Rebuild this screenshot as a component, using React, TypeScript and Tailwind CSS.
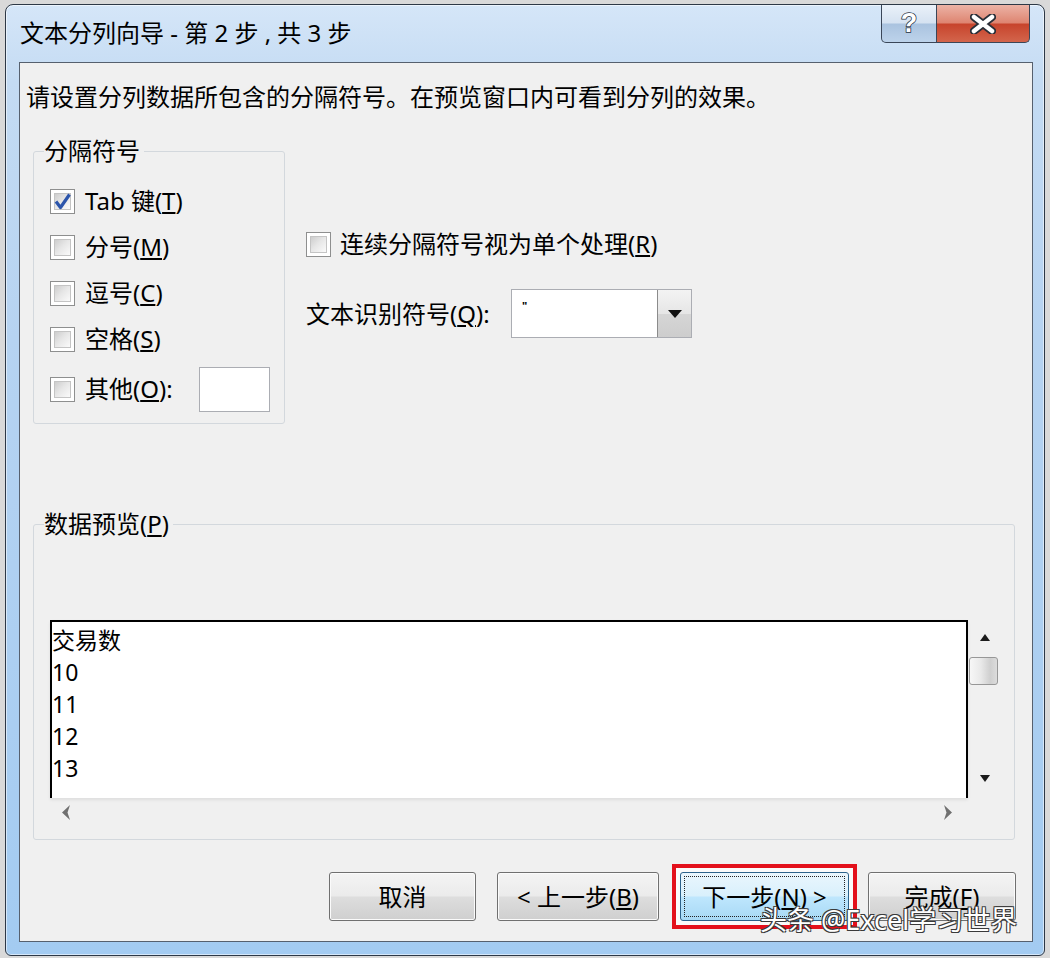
import React from 'react';

const CheckBox: React.FC<{ checked?: boolean }> = ({ checked = false }) => (
  <span className="flex h-[25px] w-[25px] shrink-0 items-center justify-center border border-[#8e8f8f] bg-white p-[3px]">
    <span className="flex h-full w-full items-center justify-center border border-[#c4c4c4] bg-[linear-gradient(135deg,#cdcdcd_0%,#e6e6e6_45%,#fafafa_100%)]">
      {checked && (
        <svg className="-m-[3px] h-[19px] w-[19px] overflow-visible" viewBox="0 0 19 19">
          <path d="M3 9.5 L7.5 15.5 L16.5 2.5" fill="none" stroke="#2c55ab" strokeWidth="3.2" strokeLinejoin="round" />
        </svg>
      )}
    </span>
  </span>
);

const Option: React.FC<{ checked?: boolean; children: React.ReactNode }> = ({ checked, children }) => (
  <div className="flex h-[46px] items-center gap-[10px]">
    <CheckBox checked={checked} />
    <span className="leading-[30px]">{children}</span>
  </div>
);

const WinButton: React.FC<{ w: string; children: React.ReactNode }> = ({ w, children }) => (
  <button
    className={`${w} flex h-[49px] items-center justify-center rounded-[3px] border border-[#707070] bg-[linear-gradient(to_bottom,#f4f4f4_0%,#ebebeb_48%,#dddddd_52%,#cfcfcf_100%)] text-[24px] leading-[30px] shadow-[inset_0_0_0_1px_#fbfbfb]`}
  >
    {children}
  </button>
);

const App: React.FC = () => {
  const rows = ['10', '11', '12', '13'];

  return (
    <div className="min-h-screen w-full bg-[#d9d9d9] pl-[5px] pt-[4px] font-['Noto_Sans','Noto_Sans_CJK_SC',sans-serif] text-black">
      {/* dialog window */}
      <div className="flex h-[952px] w-[1040px] flex-col rounded-b-[6px] rounded-t-[8px] border border-[#2d3846] bg-[linear-gradient(to_bottom,#d5e6f8_0%,#c4dbf3_8%,#b6d3f1_35%,#a3cbf1_100%)] shadow-[inset_0_0_0_1px_rgba(255,255,255,0.55)]">
        {/* title bar */}
        <div className="flex h-[57px] shrink-0 items-start">
          <span className="ml-[14px] mt-[13px] text-[24px] leading-[30px]">文本分列向导 - 第 2 步 , 共 3 步</span>
          <div className="ml-auto mr-[14px] flex h-[38px]">
            <div className="flex w-[56px] items-center justify-center rounded-bl-[5px] border border-t-0 border-[#3a4658] bg-[linear-gradient(to_bottom,#eaf1f9_0%,#d5e2f1_48%,#aac3df_52%,#bdd3eb_100%)]">
              <span className="font-['Liberation_Sans',sans-serif] text-[27px] font-bold leading-none text-white [-webkit-text-stroke:1.5px_#24303f] [paint-order:stroke_fill]">?</span>
            </div>
            <div className="flex w-[93px] items-center justify-center rounded-br-[5px] border border-l-0 border-t-0 border-[#3a4658] bg-[linear-gradient(to_bottom,#ecb3a6_0%,#de8571_48%,#c7442c_52%,#d3654c_100%)]">
              <svg width="26" height="20" viewBox="0 0 26 20">
                <path d="M4 3 L22 17 M22 3 L4 17" stroke="#2a2f38" strokeWidth="8" strokeLinecap="round" />
                <path d="M4 3 L22 17 M22 3 L4 17" stroke="#ffffff" strokeWidth="4.5" strokeLinecap="round" />
              </svg>
            </div>
          </div>
        </div>

        {/* client area */}
        <div className="ml-[13px] mr-[11px] flex h-[880px] shrink-0 flex-col border border-[#56606e] bg-[#f0f0f0]">
          <p className="mt-[19px] pl-[6px] text-[24px] leading-[30px]">请设置分列数据所包含的分隔符号。在预览窗口内可看到分列的效果。</p>

          <div className="mt-[24px] flex items-start pl-[13px] text-[24px]">
            <fieldset className="w-[252px] rounded-[3px] border border-[#d3d8dd]">
              <legend className="ml-[10px] pr-[4px] leading-[30px]">分隔符号</legend>
              <div className="pb-[9px] pl-[16px] pt-[12px]">
                <Option checked>
                  Tab 键(<u>T</u>)
                </Option>
                <Option>
                  分号(<u>M</u>)
                </Option>
                <Option>
                  逗号(<u>C</u>)
                </Option>
                <Option>
                  空格(<u>S</u>)
                </Option>
                <div className="mt-[2px] flex h-[50px] items-center gap-[10px]">
                  <CheckBox />
                  <span className="w-[104px] leading-[30px]">
                    其他(<u>O</u>):
                  </span>
                  <span className="h-[45px] w-[71px] border border-[#abadb3] bg-white" />
                </div>
              </div>
            </fieldset>

            <div className="ml-[21px] mt-[93px] flex flex-col">
              <div className="flex h-[30px] items-center gap-[9px]">
                <CheckBox />
                <span className="leading-[30px]">
                  连续分隔符号视为单个处理(<u>R</u>)
                </span>
              </div>
              <div className="mt-[30px] flex h-[49px] items-center">
                <span className="w-[205px] leading-[30px]">
                  文本识别符号(<u>Q</u>):
                </span>
                <div className="flex h-full w-[181px] border border-[#abadb3] bg-white">
                  <span className="flex-1 pl-[10px] pt-[10px] text-[11px] font-bold leading-none">"</span>
                  <span className="flex w-[34px] items-center justify-center border-l border-[#8b8b8b] bg-[linear-gradient(to_bottom,#f3f3f3_0%,#e6e6e6_50%,#d6d6d6_51%,#cdcdcd_100%)]">
                    <svg width="14" height="8" viewBox="0 0 14 8">
                      <path d="M0 0 H14 L7 8 Z" fill="#111" />
                    </svg>
                  </span>
                </div>
              </div>
            </div>
          </div>

          <fieldset className="ml-[13px] mt-[85px] w-[982px] rounded-[3px] border border-[#d3d8dd] text-[24px]">
            <legend className="ml-[10px] pr-[4px] leading-[30px]">
              数据预览(<u>P</u>)
            </legend>
            <div className="pb-[13px] pl-[16px] pt-[81px]">
              <div className="flex">
                <div className="h-[178px] w-[918px] overflow-hidden border-2 border-b-0 border-black bg-white pt-[2px] text-[23px] leading-[32px] shadow-[0_2px_3px_rgba(0,0,0,0.08)]">
                  <div>交易数</div>
                  {rows.map((r) => (
                    <div key={r}>{r}</div>
                  ))}
                </div>
                <div className="flex h-[178px] w-[32px] flex-col">
                  <div className="flex h-[34px] items-center justify-center pl-[2px]">
                    <svg width="10" height="7" viewBox="0 0 10 7">
                      <path d="M0 7 L5 0 L10 7 Z" fill="#1b1b1b" />
                    </svg>
                  </div>
                  <div className="ml-[1px] mt-[3px] h-[28px] w-[29px] rounded-[3px] border border-[#979797] bg-[linear-gradient(to_right,#f7f7f7_0%,#e9e9e9_40%,#cfcfcf_75%,#dcdcdc_100%)]" />
                  <div className="flex-1" />
                  <div className="flex h-[40px] items-center justify-center pl-[2px]">
                    <svg width="10" height="7" viewBox="0 0 10 7">
                      <path d="M0 0 L10 0 L5 7 Z" fill="#1b1b1b" />
                    </svg>
                  </div>
                </div>
              </div>
              <div className="flex h-[28px] w-[918px] items-center justify-between pl-[12px] pr-[16px]">
                <svg width="8" height="15" viewBox="0 0 8 15">
                  <path d="M8 0 L0 7.5 L8 15 L5.5 7.5 Z" fill="#707070" />
                </svg>
                <svg width="8" height="15" viewBox="0 0 8 15">
                  <path d="M0 0 L8 7.5 L0 15 L2.5 7.5 Z" fill="#707070" />
                </svg>
              </div>
            </div>
          </fieldset>

          <div className="relative mt-[32px] flex h-[49px] justify-end pr-[16px]">
            <WinButton w="w-[147px]">取消</WinButton>
            <div className="ml-[21px]">
              <WinButton w="w-[162px]">
                &lt; 上一步(<u>B</u>)
              </WinButton>
            </div>
            {/* red highlight around the default button */}
            <div className="-my-[8px] -mr-[8px] ml-[13px] h-[65px] border-4 border-[#e3101b] bg-[#fafafa] p-[4px]">
              <button className="h-[49px] w-[169px] rounded-[3px] border border-[#2c628b] bg-[linear-gradient(to_bottom,#eaf6fd_0%,#d9f0fc_48%,#bee6fd_52%,#a7d9f5_100%)] p-[3px] text-[24px] leading-[30px]">
                <span className="flex h-full w-full items-center justify-center border border-dotted border-[#222]">
                  下一步(<u>N</u>) &gt;
                </span>
              </button>
            </div>
            <div className="ml-[19px]">
              <WinButton w="w-[148px]">
                完成(<u>F</u>)
              </WinButton>
            </div>
            <span className="absolute left-[740px] top-[33px] whitespace-nowrap text-[27px] leading-[30px] text-white [text-shadow:-1px_-1px_0_#3a3a3a,1px_-1px_0_#3a3a3a,-1px_1px_0_#3a3a3a,1px_1px_0_#3a3a3a]">
              头条 @Excel学习世界
            </span>
          </div>
        </div>
      </div>
    </div>
  );
};

export default App;
